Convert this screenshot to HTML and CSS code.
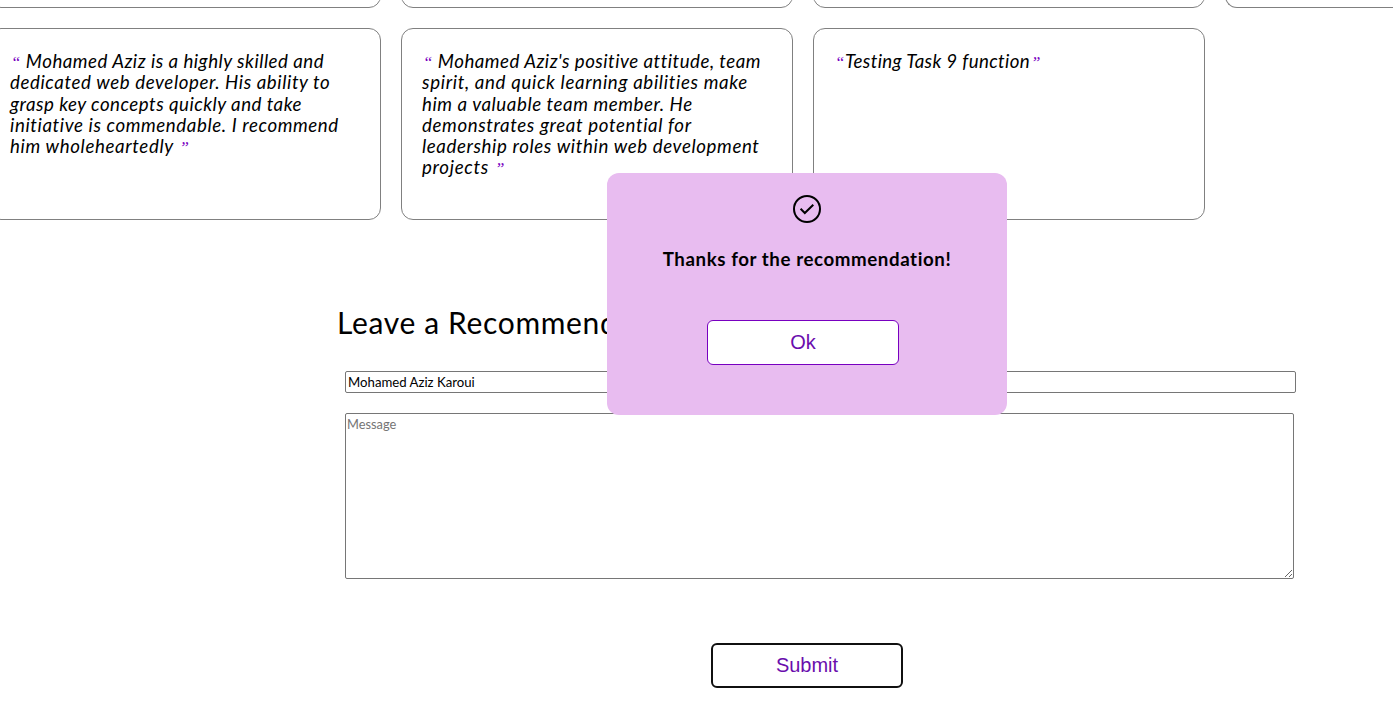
FILE: index.html
```html
<!DOCTYPE html>
<html lang="en">
<head>
<meta charset="utf-8">
<title>Recommendations</title>
<link rel="stylesheet" href="styles.css">
</head>
<body>
<section class="cards">
  <article class="card"></article><article class="card"></article><article class="card"></article><article class="card"></article>
  <article class="card"><p class="quote"><span class="line l1"><i class="mark open">“</i> Mohamed Aziz is a highly skilled and</span><span class="line l2">dedicated web developer. His ability to</span><span class="line l3">grasp key concepts quickly and take</span><span class="line l4">initiative is commendable. I recommend</span><span class="line l5">him wholeheartedly <i class="mark">”</i></span></p></article>
  <article class="card"><p class="quote"><span class="line m1"><i class="mark open">“</i> Mohamed Aziz's positive attitude, team</span><span class="line m2">spirit, and quick learning abilities make</span><span class="line m3">him a valuable team member. He</span><span class="line m4">demonstrates great potential for</span><span class="line m5">leadership roles within web development</span><span class="line m6">projects <i class="mark">”</i></span></p></article>
  <article class="card"><p class="quote"><span class="line n1"><i class="mark open">“</i>Testing Task 9 function<i class="mark">”</i></span></p></article>
</section>
<form class="form">
  <h2 class="title">Leave a Recommendation</h2>
  <input class="name" value="Mohamed Aziz Karoui">
  <textarea class="message" placeholder="Message"></textarea>
  <button class="btn submit" type="button">Submit</button>
</form>
<div class="popup" role="dialog">
  <svg class="check" viewBox="0 0 28 28" fill="none" stroke="#000" stroke-width="2"><circle cx="14" cy="14" r="13"/><path d="M7.6 13.8l4.2 4.2L20.3 9.8"/></svg>
  <h3 class="thanks">Thanks for the recommendation!</h3>
  <button class="btn ok" type="button">Ok</button>
</div>
</body>
</html>
```
FILE: styles.css
```css
* { box-sizing: border-box; }
body { margin: 0; width: 1393px; height: 720px; overflow: hidden; position: relative; background: #fff; color: #000; font-family: "Trebuchet MS", Lato, sans-serif; }
.cards { display: grid; grid-template-columns: 392px 392px 392px 179px; grid-auto-rows: 192px; gap: 20px; width: 1404px; overflow: hidden; margin: -184px 0 0 -11px; }
.card { border: 1px solid #808080; border-radius: 12px; padding: 22px 20px; }
.card:nth-child(4) { border-right: 0; border-radius: 12px 0 0 12px; width: 168px; }
.quote { margin: 0; font-size: 18.7px; line-height: 21.3px; font-style: italic; white-space: nowrap; }
.line { display: block; width: max-content; }
.l1 { letter-spacing: .49px; }
.l2 { letter-spacing: .59px; }
.l3 { letter-spacing: .49px; }
.l4 { letter-spacing: .6px; }
.l5 { letter-spacing: .63px; }
.m1 { letter-spacing: .49px; }
.m2 { letter-spacing: .66px; }
.m3 { letter-spacing: .58px; }
.m4 { letter-spacing: .62px; }
.m5 { letter-spacing: .61px; }
.m6 { letter-spacing: .7px; }
.n1 { letter-spacing: .36px; }
.mark { color: #7800c0; font-family: "Liberation Serif", serif; font-size: 17px; line-height: 1; letter-spacing: 0; margin-left: 1px; }
.open { display: inline-block; width: 10px; }
.form { display: flex; flex-direction: column; width: 960px; margin: 82px 0 0 336px; }
.title { margin: 0 0 0 1px; font-weight: 400; font-size: 30px; line-height: 40px; letter-spacing: .65px; }
.name { margin: 29px 0 0 9px; width: 951px; height: 22px; border: 1px solid #767676; border-radius: 2px; padding: 1px 2px; font: 13.2px "Trebuchet MS", Lato, sans-serif; }
.message { margin: 20px 0 0 9px; width: 949px; height: 166px; border: 1px solid #767676; border-radius: 2px; padding: 2px 1px; font: 12.8px "Trebuchet MS", Lato, sans-serif; }
.message::placeholder { color: #757575; }
.btn { width: 192px; height: 45px; border: 1px solid #7800c0; border-radius: 6px; padding: 0; background: #fff; color: #6a0dad; font: 20px "Liberation Sans", sans-serif; }
.submit { margin: 64px 0 0 375px; border: 2px solid #101010; }
.popup { position: absolute; left: 607px; top: 173px; width: 400px; height: 242px; border-radius: 12px; background: #e8bcf0; display: flex; flex-direction: column; align-items: center; padding-top: 22px; }
.check { width: 28px; height: 28px; }
.thanks { margin: 22px 0 0; font-size: 18.72px; line-height: 28px; letter-spacing: .58px; }
.ok { margin: 47px 8px 0 0; }
```
